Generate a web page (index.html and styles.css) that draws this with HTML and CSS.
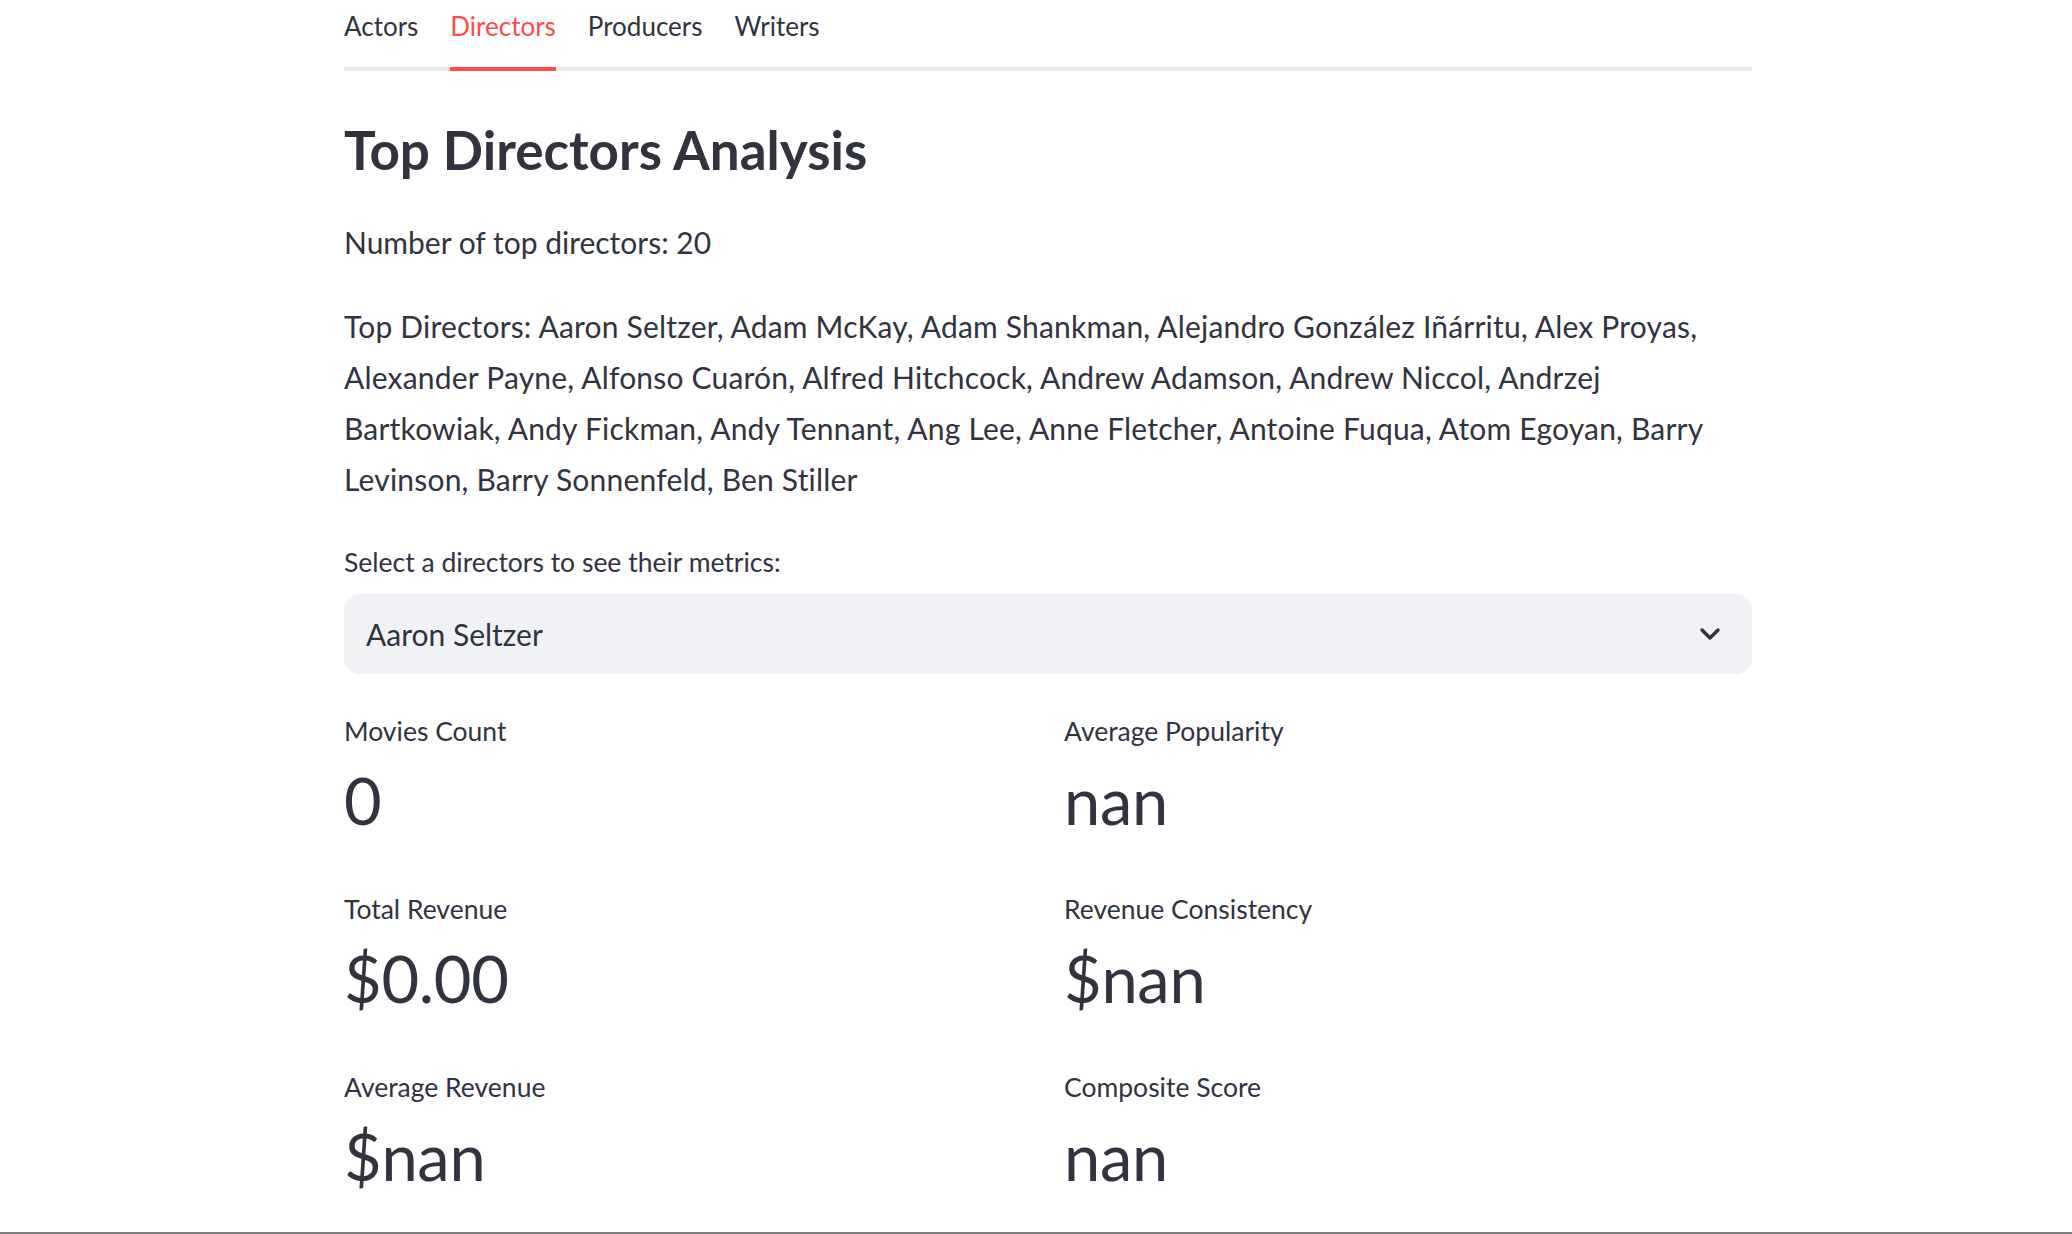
FILE: index.html
```html
<!DOCTYPE html>
<html lang="en">
<head>
<meta charset="utf-8">
<title>Top Directors Analysis</title>
<link rel="stylesheet" href="styles.css">
</head>
<body>
<main class="main">
  <nav class="tabs">
    <div class="tab">Actors</div>
    <div class="tab active">Directors</div>
    <div class="tab">Producers</div>
    <div class="tab">Writers</div>
  </nav>

  <h2 class="title">Top Directors Analysis</h2>
  <p class="text count">Number of top directors: 20</p>
  <p class="text list">Top Directors: Aaron Seltzer, Adam McKay, Adam Shankman, Alejandro González Iñárritu, Alex Proyas, Alexander Payne, Alfonso Cuarón, Alfred Hitchcock, Andrew Adamson, Andrew Niccol, Andrzej Bartkowiak, Andy Fickman, Andy Tennant, Ang Lee, Anne Fletcher, Antoine Fuqua, Atom Egoyan, Barry Levinson, Barry Sonnenfeld, Ben Stiller</p>

  <label class="label">Select a directors to see their metrics:</label>
  <div class="select">
    <span class="select-value">Aaron Seltzer</span>
    <svg class="chevron" width="22" height="14" viewBox="0 0 22 14"><path d="M3 3 L11 11 L19 3" fill="none" stroke="#31333F" stroke-width="3.4" stroke-linecap="round" stroke-linejoin="round"/></svg>
  </div>

  <section class="metrics">
    <div class="metric"><div class="m-label">Movies Count</div><div class="m-value">0</div></div>
    <div class="metric"><div class="m-label">Average Popularity</div><div class="m-value">nan</div></div>
    <div class="metric"><div class="m-label">Total Revenue</div><div class="m-value">$0.00</div></div>
    <div class="metric"><div class="m-label">Revenue Consistency</div><div class="m-value">$nan</div></div>
    <div class="metric"><div class="m-label">Average Revenue</div><div class="m-value">$nan</div></div>
    <div class="metric"><div class="m-label">Composite Score</div><div class="m-value">nan</div></div>
  </section>
</main>
<div class="edge"></div>
</body>
</html>
```

FILE: styles.css
```css
html, body {
  margin: 0;
  padding: 0;
  background: #ffffff;
  overflow: hidden;
}
body {
  font-family: Lato, "Noto Sans", sans-serif;
  color: #31333F;
  height: 1234px;
}
.main {
  width: 1408px;
  margin-left: 344px;
}
.tabs {
  display: flex;
  gap: 32px;
  border-bottom: 4px solid #e8e8e8;
  height: 67px;
}
.tab {
  font-size: 26px;
  line-height: 52px;
  height: 67px;
  box-sizing: border-box;
}
.tab.active {
  color: #FF4B4B;
  border-bottom: 4px solid #FF4B4B;
  height: 71px;
}
.title {
  margin: 47px 0 0;
  font-size: 53px;
  line-height: 1.2;
  font-weight: 700;
}
.text {
  margin: 0;
  font-size: 30px;
  line-height: 51.2px;
}
.count {
  margin-top: 35px;
}
.list {
  margin-top: 33px;
  letter-spacing: 0.2px;
}
.label {
  display: block;
  margin-top: 36px;
  font-size: 26.5px;
  line-height: 40px;
}
.select {
  margin-top: 12px;
  height: 80px;
  border-radius: 16px;
  background: #F0F2F6;
  display: flex;
  align-items: center;
  justify-content: space-between;
  padding: 0 31px 0 22px;
}
.select-value {
  font-size: 30px;
}
.chevron {
  display: block;
}
.metrics {
  margin-top: 37px;
  display: grid;
  grid-template-columns: 1fr 1fr;
  column-gap: 32px;
  row-gap: 50px;
}
.m-label {
  font-size: 26.5px;
  line-height: 40px;
}
.m-value {
  margin-top: 10px;
  font-size: 65px;
  line-height: 1.2;
  letter-spacing: -0.3px;
}
.edge {
  position: fixed;
  left: 0;
  right: 0;
  bottom: 0;
  height: 2px;
  background: #7d7d7d;
}
```
